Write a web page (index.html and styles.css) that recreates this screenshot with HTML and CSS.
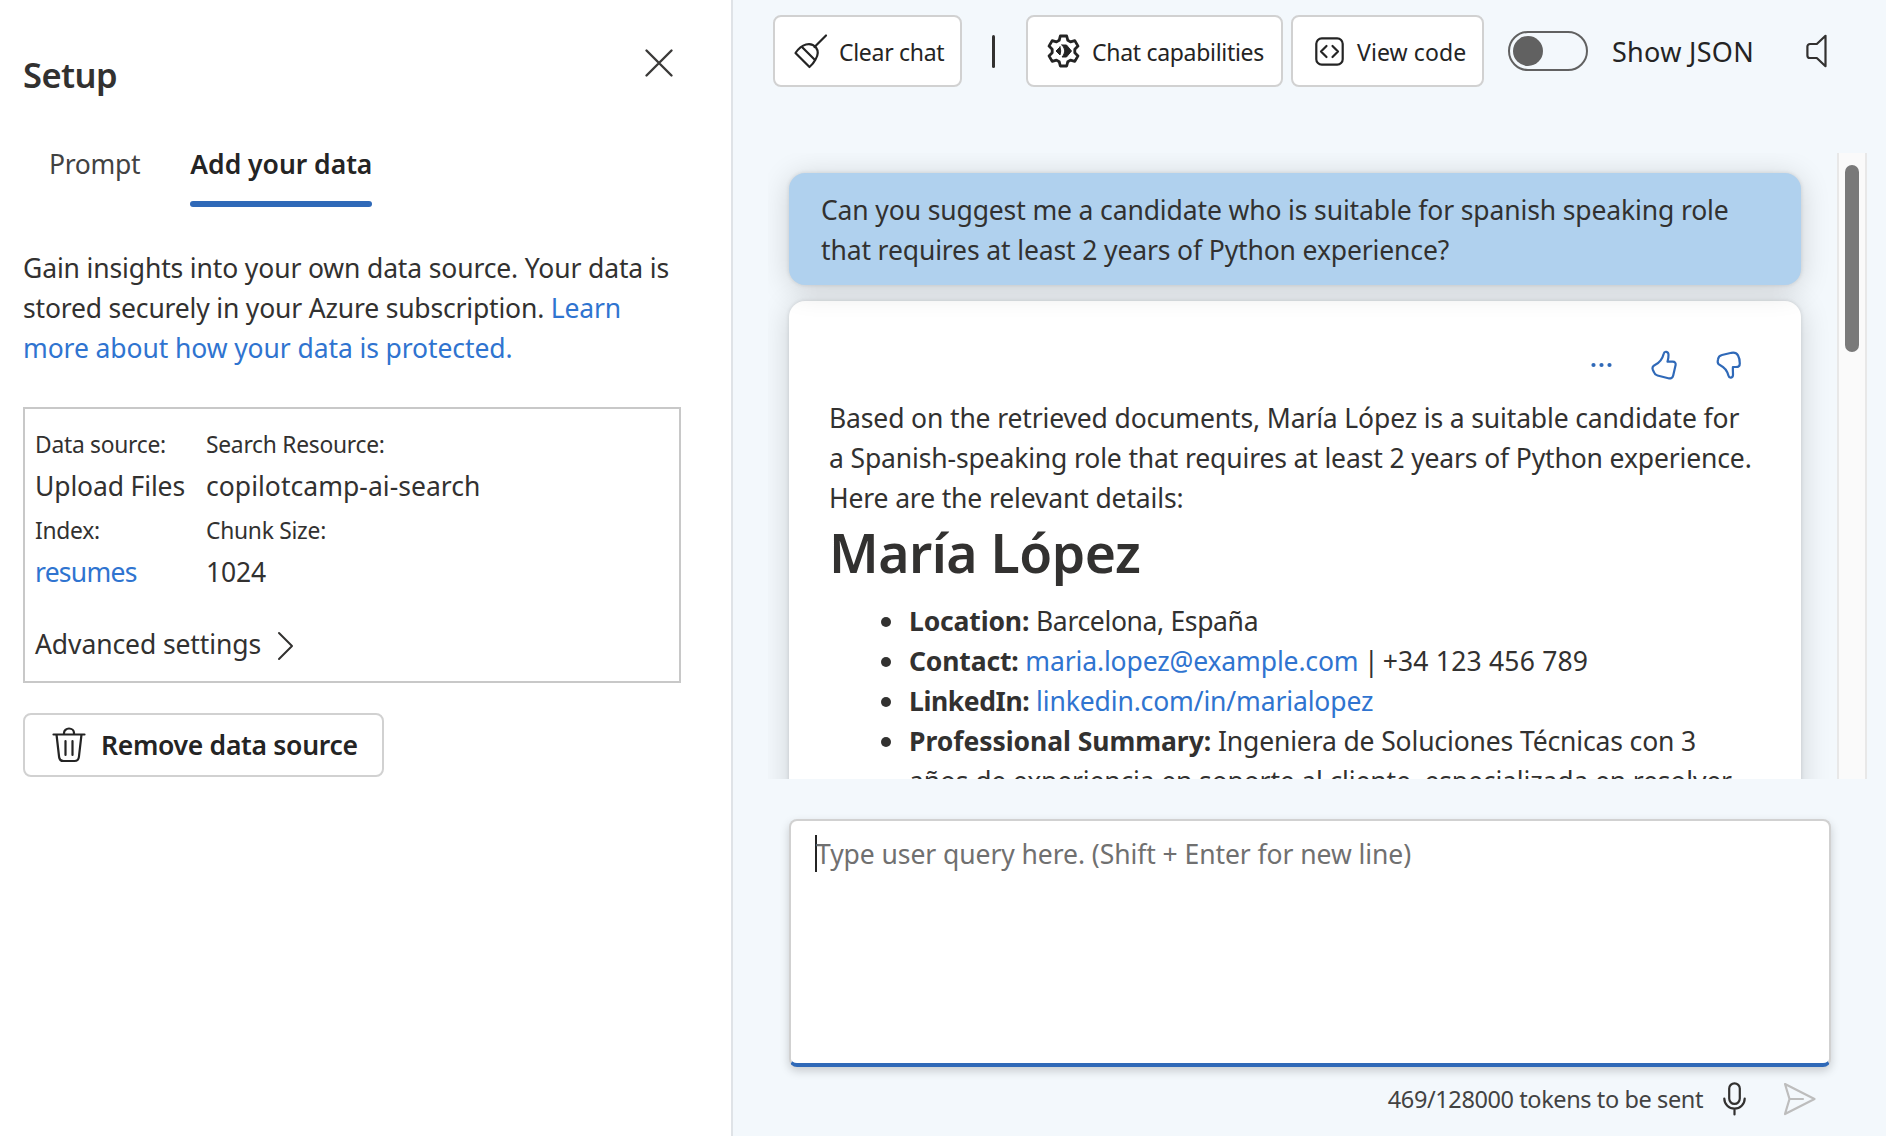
FILE: index.html
```
<!DOCTYPE html>
<html lang="en">
<head>
<meta charset="utf-8">
<title>Chat playground</title>
<link rel="stylesheet" href="styles.css">
</head>
<body>
<div class="app">
  <aside class="setup">
    <header class="setup-head">
      <h2 class="setup-title">Setup</h2>
      <svg class="close" width="28" height="28" viewBox="0 0 28 28"><path d="M1.500 1.500l25 25M26.500 1.500l-25 25"/></svg>
    </header>
    <nav class="tabs">
      <span class="tab-prompt">Prompt</span>
      <span class="tab-active">Add your data<i></i></span>
    </nav>
    <p class="intro">Gain insights into your own data source. Your data is<br><span class="intro-mid">stored securely in your Azure subscription. <a>Learn</a></span><br><a class="intro-end">more about how your data is protected.</a></p>
    <section class="source">
      <div class="source-grid">
        <span class="label">Data source:</span><span class="label">Search Resource:</span>
        <span>Upload Files</span><span class="resource">copilotcamp-ai-search</span>
        <span class="label">Index:</span><span class="label">Chunk Size:</span>
        <a class="index">resumes</a><span>1024</span>
      </div>
      <div class="advanced">Advanced settings
        <svg width="17" height="30" viewBox="0 0 17 30"><path d="M2 2l13 13L2 28"/></svg>
      </div>
    </section>
    <button class="btn remove">
      <svg width="34" height="36" viewBox="0 0 34 36"><path d="M1.500 7.500h31M12 7.500V6a5 4.500 0 0 1 10 0v1.500M4.500 7.500l2.600 22.500a4.500 4.500 0 0 0 4.400 4h11a4.500 4.500 0 0 0 4.400-4L29.500 7.500M13.500 14v14M20.500 14v14"/></svg>
      <span>Remove data source</span>
    </button>
  </aside>

  <main class="chat">
    <div class="toolbar">
      <button class="btn tool clear">
        <svg width="34" height="36" viewBox="0 0 34 36"><path d="M32 2.500L20.500 14M1.500 20C4.500 15.500 8 12.500 12 11.500c4-1 7.500 0 10 3 2.500 3.500 2 8-.5 12-1.600 3-3.500 5.500-6 7.500zM8.500 14.500L20.500 26.500"/></svg>
        <span>Clear chat</span>
      </button>
      <i class="divider"></i>
      <button class="btn tool caps">
        <svg width="33" height="34" viewBox="0 0 33 34"><path class="gear" d="M13.300 2h6.400l1.100 4.300 2.700 1.600 4.300-1.300 3.200 5.500-3.200 3.200v3.400l3.200 3.200-3.200 5.500-4.300-1.300-2.700 1.600-1.100 4.300h-6.400l-1.100-4.300-2.700-1.600-4.300 1.300-3.200-5.500 3.200-3.200v-3.400L2 12.100l3.200-5.500 4.300 1.300 2.700-1.600z"/><path class="solid" d="M13 13l-4 4 4 4q1.500-4 0-8zM15 11h4.500l5 6-5 6H15q1-1 2-3l.8-3-.8-3q-1-2-2-3z"/></svg>
        <span>Chat capabilities</span>
      </button>
      <button class="btn tool code">
        <svg width="29" height="29" viewBox="0 0 29 29"><rect x="1.300" y="1.300" width="26.400" height="26.400" rx="5.500"/><path d="M11.500 9L6 14.500l5.500 5.500M17.500 9l5.500 5.500-5.500 5.500"/></svg>
        <span>View code</span>
      </button>
      <span class="toggle"><i></i></span>
      <span class="json">Show JSON</span>
      <svg class="speaker" width="21" height="34" viewBox="0 0 21 34"><path d="M19.500 1.800v30.400L10.800 24H4a2.600 2.600 0 0 1-2.600-2.600v-8.800A2.600 2.600 0 0 1 4 10h6.800z"/></svg>
    </div>

    <div class="viewport">
      <div class="messages">
        <div class="bubble">Can you suggest me a candidate who is suitable for spanish speaking role<br>that requires at least 2 years of Python experience?</div>
        <article class="answer">
          <div class="actions">
            <svg width="21" height="6" viewBox="0 0 21 6"><g class="dots"><circle cx="2.500" cy="3" r="2.100"/><circle cx="10.500" cy="3" r="2.100"/><circle cx="18.500" cy="3" r="2.100"/></g></svg>
            <svg width="26" height="30" viewBox="0 0 26 30"><path d="M12.800 3.500c.6-2.600 4.600-2.300 4.700 1.200.1 2.500-.3 4.500-1 7h5.200c2.200 0 3.300 1.400 2.900 3.400l-2.400 10.300c-.6 2.500-2.400 3.500-4.900 2.900L6.500 25.500c-2-.5-3-1.500-3.500-3.200l-1.200-2.600c-.9-2.300.2-3.900 2.500-5C9 12.500 11.500 8.500 12.800 3.500z"/></svg>
            <svg width="26" height="30" viewBox="0 0 26 30"><path d="M12.500 25.800c.7 2.600 4.500 2.500 4.500-1 0-2.800-.3-5-.1-7.800h3.100c2.600 0 3.800-1.500 3.800-3.600 0-3-.4-5.500-1.800-8-1.500-2.500-3.600-3.200-6.500-2.600L6 5C3.500 5.600 2.300 7 2 9.400l-.3 1.900c-.2 2 .8 3.100 2.600 4 4.600 2.200 6.900 5.700 8.200 10.500z"/></svg>
          </div>
          <p>Based on the retrieved documents, María López is a suitable candidate for<br>a Spanish-speaking role that requires at least 2 years of Python experience.<br>Here are the relevant details:</p>
          <h1>María López</h1>
          <ul>
            <li><b>Location:</b> <span class="place">Barcelona, España</span></li>
            <li><b>Contact:</b> <a>maria.lopez@example.com</a><span class="pipe"> | </span><span class="phone">+34 123 456 789</span></li>
            <li><b class="linkedin">LinkedIn:</b> <a>linkedin.com/in/marialopez</a></li>
            <li><b class="summary">Professional Summary:</b> Ingeniera de Soluciones Técnicas con 3<br>años de experiencia en soporte al cliente, especializada en resolver</li>
          </ul>
        </article>
      </div>
      <div class="scrollbar"><i></i></div>
    </div>

    <div class="composer"><i class="caret"></i><span>Type user query here. (Shift + Enter for new line)</span></div>
    <footer class="status">
      <span class="tokens">469/128000 tokens to be sent</span>
      <svg class="mic" width="23" height="33" viewBox="0 0 23 33"><path d="M11.500 1.300a5.300 5.300 0 0 1 5.300 5.300v10a5.300 5.300 0 0 1-10.600 0v-10a5.300 5.300 0 0 1 5.300-5.300zM1.300 16.500a10.200 10.200 0 0 0 20.400 0M11.500 27v5.500"/></svg>
      <svg class="send" width="34" height="34" viewBox="0 0 34 34"><path d="M2 2l29.500 15L2 32l4.500-15zM6.500 17H20"/></svg>
    </footer>
  </main>
</div>
</body>
</html>
```
FILE: styles.css
```
* { box-sizing: border-box; }

body {
  margin: 0;
  color: #323130;
  font: 26.5px/40px "Noto Sans", "Open Sans", sans-serif;
  letter-spacing: -0.14px;
  white-space: nowrap;
}

a { color: #2f74d0; }
h1, h2, p, ul { margin: 0; font-weight: 400; }

svg { display: block; flex: none; overflow: visible; }
path, rect {
  fill: none;
  stroke: currentColor;
  stroke-width: 2.2;
  stroke-linecap: round;
  stroke-linejoin: round;
}

.app { display: flex; width: 1886px; height: 1136px; overflow: hidden; }

/* Setup panel */
.setup {
  width: 733px;
  flex: none;
  padding: 53px 50px 0 23px;
  background: #fff;
  border-right: 2px solid #dfe3e7;
}
.setup-head { display: flex; justify-content: space-between; height: 91px; padding-right: 8px; }
.setup-title { font-size: 34.5px; line-height: 44px; font-weight: 600; letter-spacing: -0.55px; }
.close { margin-top: -4px; color: #3b3a39; }
.close path { stroke-width: 2.4; }

.tabs { display: flex; gap: 50px; padding-left: 26px; height: 63px; }
.tab-prompt { color: #424242; letter-spacing: -0.3px; }
.tab-active { display: flex; flex-direction: column; justify-content: space-between; width: 182px; color: #242424; font-weight: 600; letter-spacing: -0.03px; }
.tab-active i { height: 6px; border-radius: 3px; background: #2f69b8; }
.intro { margin-top: 41px; }
.intro-mid { letter-spacing: -0.18px; }
.intro-end { letter-spacing: -0.1px; }

.source { height: 276px; margin-top: 39px; padding: 19px 0 0 10px; border: 2px solid #c8c8c8; }
.source-grid { display: grid; grid-template-columns: 171px auto; grid-template-rows: 38px 48px 38px 40px; }
.label { font-size: 22.8px; line-height: 34px; letter-spacing: -0.26px; }
.resource { letter-spacing: 0.03px; }
.index { letter-spacing: -0.75px; }
.advanced { display: flex; align-items: center; gap: 16px; height: 40px; margin-top: 32px; letter-spacing: -0.1px; }
.advanced svg { margin-top: 3px; }
.advanced path { stroke-width: 2; }

.btn {
  display: flex;
  align-items: center;
  flex: none;
  padding: 0;
  color: #242424;
  font: inherit;
  background: #fff;
  border: 2px solid #d1d1d1;
  border-radius: 8px;
}
.remove { width: 361px; height: 64px; margin-top: 30px; padding: 0 0 0 27px; gap: 15px; font-weight: 600; letter-spacing: -0.3px; }
.remove svg { margin-top: -1px; }

/* Chat panel */
.chat { flex: 1; padding: 15px 19px 0 40px; background: #f3f8fc; }

.toolbar { display: flex; align-items: center; height: 72px; }
.tool { height: 72px; font-size: 23px; letter-spacing: -0.3px; }
.tool span { margin-top: 2px; }
.clear { width: 189px; padding-left: 19px; gap: 11px; }
.divider { width: 3px; height: 33px; margin: 0 31px 0 30px; border-radius: 2px; background: #323130; }
.caps { width: 257px; padding-left: 19px; gap: 12px; }
.caps .gear { stroke-width: 2.8; }
.caps .solid { fill: currentColor; stroke-width: 1; }
.code { width: 193px; margin-left: 8px; padding-left: 22px; gap: 13px; letter-spacing: 0.1px; }
.toggle { width: 80px; height: 40px; margin-left: 24px; padding: 3px; border: 2px solid #616161; border-radius: 20px; }
.toggle i { display: block; width: 30px; height: 30px; border-radius: 50%; background: #616161; }
.json { margin: 1px 0 0 24px; width: 194px; color: #242424; font-size: 27px; letter-spacing: 0.3px; }
.speaker { color: #323130; }

.viewport { display: flex; justify-content: space-between; height: 626px; margin: 66px 0 0 -5px; overflow: hidden; }
.messages { padding: 20px 0 0 21px; }
.bubble, .answer {
  width: 1012px;
  border-radius: 16px;
  box-shadow: 0 0 4px rgba(0, 0, 0, .12), 0 4px 30px rgba(0, 0, 0, .16);
}
.bubble { position: relative; height: 112px; padding: 17px 32px; background: #b0d1ee; letter-spacing: -0.13px; }
.answer { height: 700px; margin-top: 16px; padding: 49px 40px 0; background: #fff; }
.actions { display: flex; align-items: center; justify-content: flex-end; gap: 39px; height: 30px; margin: 0 19px 18px; color: #2f69b8; }
.dots { fill: currentColor; }
h1 { font-size: 53.5px; line-height: 70px; font-weight: 600; letter-spacing: -0.5px; }
ul { margin-top: 13px; padding: 0 0 0 80px; list-style: none; }
li::before {
  content: "";
  display: inline-block;
  width: 10px;
  height: 10px;
  margin: 0 18px 0 -28px;
  vertical-align: 4px;
  border-radius: 50%;
  background: #323130;
}
b { font-weight: 700; letter-spacing: -0.15px; }
.linkedin { letter-spacing: -0.4px; }
.summary { letter-spacing: -0.05px; }
.place { letter-spacing: -0.35px; }
.pipe { letter-spacing: -1.4px; }
.phone { letter-spacing: 0.2px; }

.scrollbar { width: 30px; padding: 12px 0 0 6px; background: #fafafa; border: 2px solid #e8e8e8; border-width: 0 2px; }
.scrollbar i { display: block; width: 14px; height: 187px; border-radius: 7px; background: #797979; }

.composer {
  display: flex;
  width: 1042px;
  height: 248px;
  margin: 40px 0 0 16px;
  padding: 13px 25px 13px 24px;
  color: #707070;
  letter-spacing: -0.07px;
  background: #fff;
  border: 2px solid #d1d1d1;
  border-bottom: 4px solid #2f69b8;
  border-radius: 8px;
  box-shadow: 0 4px 10px rgba(0, 0, 0, .18);
}
.caret { width: 2px; height: 37px; margin: 1px -1px 0 0; background: #242424; }

.status { display: flex; align-items: center; justify-content: flex-end; height: 63px; padding-right: 50px; }
.tokens { color: #424242; font-size: 23.5px; letter-spacing: -0.4px; }
.mic { margin-left: 20px; }
.send { margin-left: 37px; color: #bdbdbd; }
```
